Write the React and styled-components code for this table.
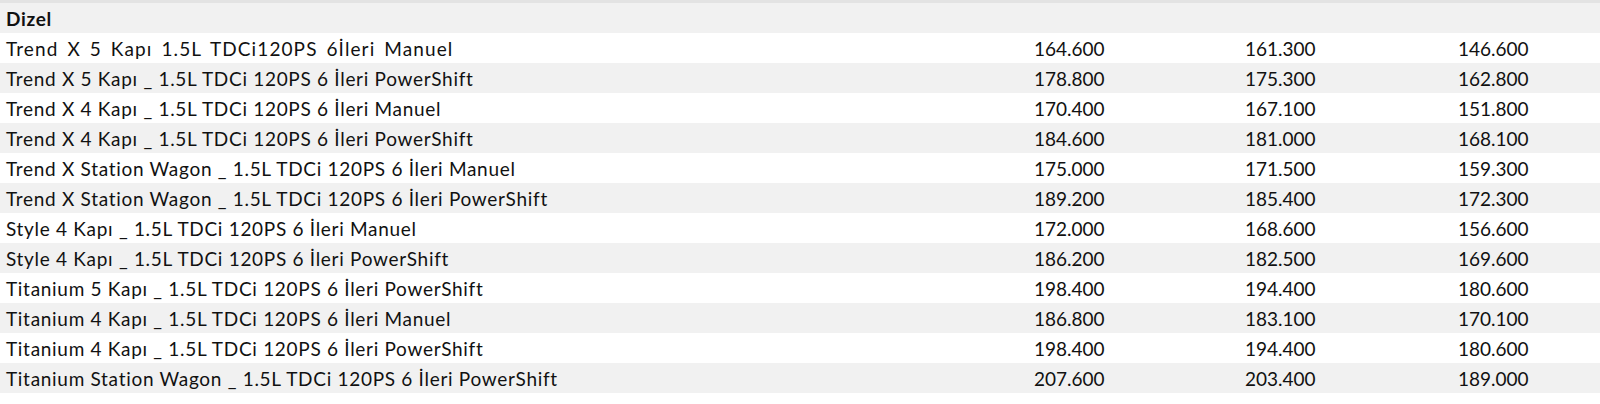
import React from "react";
import styled, { createGlobalStyle } from "styled-components";

const GlobalStyle = createGlobalStyle`
    body {
        margin: 0;
        background: #fff;
        font-family: Lato, "Open Sans", sans-serif;
        color: #111;
    }
`

const Table = styled.div`
    display: flex;
    flex-direction: column;
    border-top: 3px solid #e3e3e3;
`

const Row = styled.div`
    display: grid;
    grid-template-columns: 1034px 211px 213px 1fr;
    height: 30px;
    box-sizing: border-box;
    padding-top: 1px;
    align-items: center;
    background: ${props => props.shaded ? "#f1f1f1" : "#fff"};
    font-size: 19px;
    line-height: 28px;
    white-space: nowrap;
`

const Name = styled.div`
    padding-left: 6px;
    letter-spacing: ${props => props.loose ? "1.1px" : "0.7px"};
    word-spacing: ${props => props.loose ? "3px" : "0"};
    font-weight: ${props => props.bold ? 700 : 400};
`

const Price = styled.div``

const rows = [
    ["Trend X 5 Kapı 1.5L TDCi120PS 6İleri Manuel", "164.600", "161.300", "146.600", true],
    ["Trend X 5 Kapı _ 1.5L TDCi 120PS 6 İleri PowerShift", "178.800", "175.300", "162.800"],
    ["Trend X 4 Kapı _ 1.5L TDCi 120PS 6 İleri Manuel", "170.400", "167.100", "151.800"],
    ["Trend X 4 Kapı _ 1.5L TDCi 120PS 6 İleri PowerShift", "184.600", "181.000", "168.100"],
    ["Trend X Station Wagon _ 1.5L TDCi 120PS 6 İleri Manuel", "175.000", "171.500", "159.300"],
    ["Trend X Station Wagon _ 1.5L TDCi 120PS 6 İleri PowerShift", "189.200", "185.400", "172.300"],
    ["Style 4 Kapı _ 1.5L TDCi 120PS 6 İleri Manuel", "172.000", "168.600", "156.600"],
    ["Style 4 Kapı _ 1.5L TDCi 120PS 6 İleri PowerShift", "186.200", "182.500", "169.600"],
    ["Titanium 5 Kapı _ 1.5L TDCi 120PS 6 İleri PowerShift", "198.400", "194.400", "180.600"],
    ["Titanium 4 Kapı _ 1.5L TDCi 120PS 6 İleri Manuel", "186.800", "183.100", "170.100"],
    ["Titanium 4 Kapı _ 1.5L TDCi 120PS 6 İleri PowerShift", "198.400", "194.400", "180.600"],
    ["Titanium Station Wagon _ 1.5L TDCi 120PS 6 İleri PowerShift", "207.600", "203.400", "189.000"],
];

const App = () => {
    return (
        <>
            <GlobalStyle />
            <Table>
                <Row shaded>
                    <Name bold>Dizel</Name>
                </Row>
                {rows.map((r, i) => (
                    <Row key={i} shaded={i % 2 === 1}>
                        <Name loose={r[4]}>{r[0]}</Name>
                        <Price>{r[1]}</Price>
                        <Price>{r[2]}</Price>
                        <Price>{r[3]}</Price>
                    </Row>
                ))}
            </Table>
        </>
    )
}

export default App;
